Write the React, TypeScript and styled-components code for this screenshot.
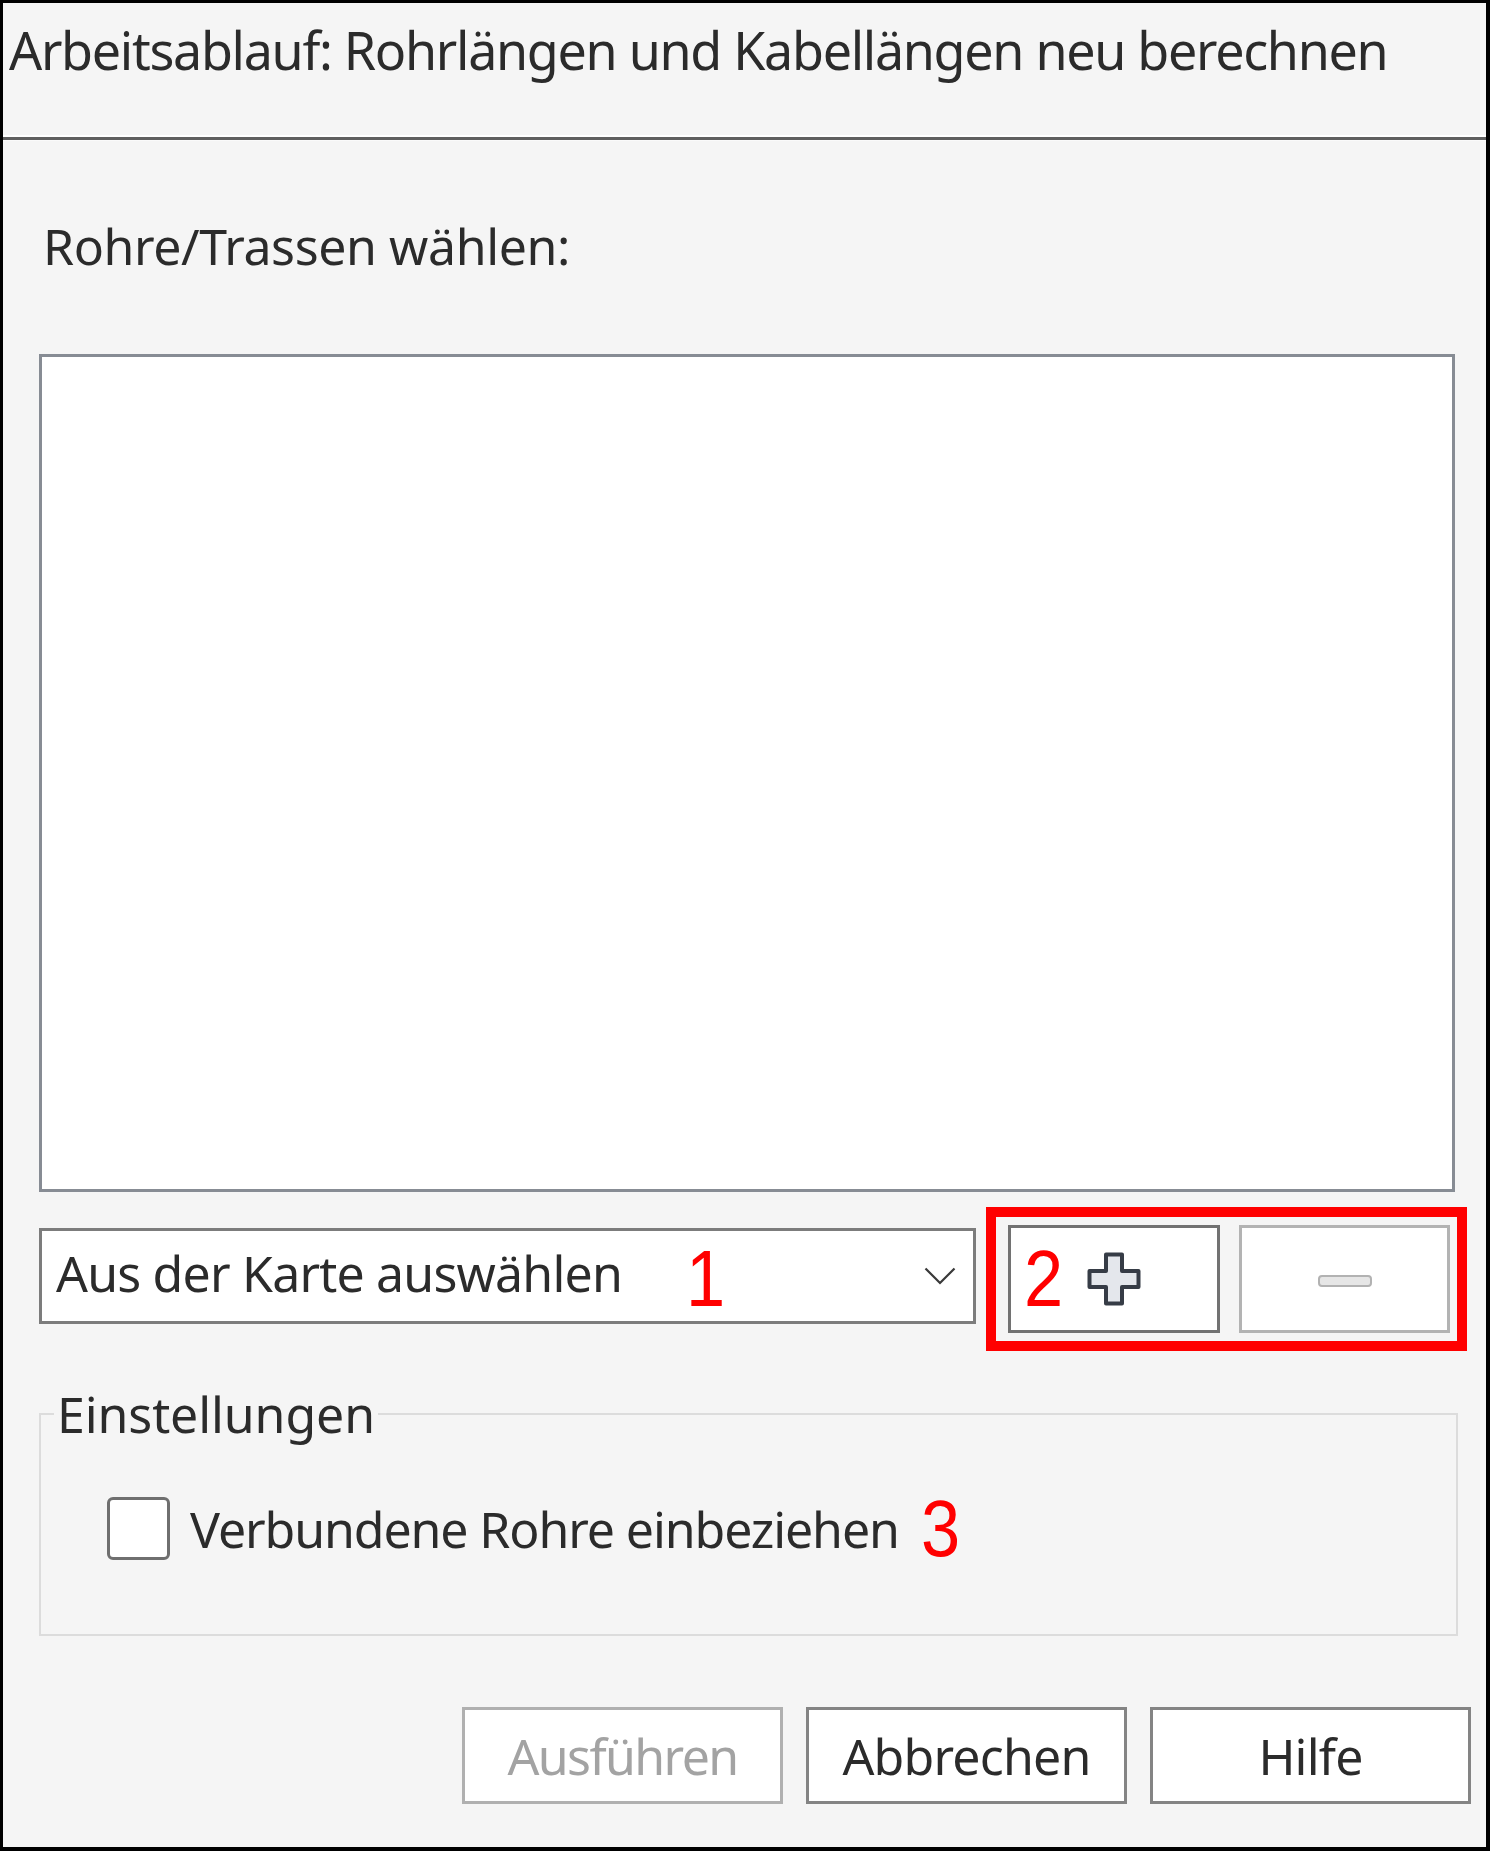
import React from "react";
import styled, { createGlobalStyle } from "styled-components";

const GlobalStyle = createGlobalStyle`
  html, body {
    margin: 0;
    padding: 0;
    background: #f5f5f5;
  }
  * {
    box-sizing: border-box;
  }
`;

const Dialog = styled.div`
  width: 1490px;
  height: 1851px;
  border: 3px solid #000;
  border-right-width: 4px;
  border-bottom-width: 4px;
  background: #f5f5f5;
  font-family: "Noto Sans", "Open Sans", sans-serif;
  color: #2b2b2b;
  display: flex;
  flex-direction: column;
`;

const Header = styled.div`
  height: 132px;
  padding: 17px 0 0 6px;
  font-size: 52px;
  line-height: 60px;
  letter-spacing: -1.3px;
  white-space: nowrap;
`;

const Rule = styled.div`
  height: 6px;
  border-top: 2px solid #fff;
  border-bottom: 1px solid #fafafa;
  background: #5f5f5f;
`;

const Body = styled.div`
  flex: 1;
  display: flex;
  flex-direction: column;
  padding: 0 15px 0 36px;
  font-size: 50px;
  line-height: 60px;
  letter-spacing: -0.8px;
`;

const SectionLabel = styled.div`
  margin-top: 75px;
  padding-left: 4px;
  letter-spacing: -0.4px;
`;

const ListBox = styled.div`
  margin-top: 78px;
  width: 1416px;
  height: 838px;
  border: 3px solid #878c94;
  background: #fff;
`;

const PickRow = styled.div`
  margin-top: 15px;
  display: flex;
  align-items: center;
  gap: 10px;
`;

const Dropdown = styled.div`
  width: 937px;
  height: 96px;
  margin-bottom: 6px;
  border: 3px solid #7c7c7c;
  background: #fff;
  padding: 0 0 6px 14px;
  display: flex;
  align-items: center;
  white-space: nowrap;
`;

const Chevron = styled.svg`
  margin-left: auto;
  margin-right: 17px;
  margin-top: 6px;
`;

const Marker = styled.span<{ $gap?: number; $drop?: number }>`
  display: inline-block;
  font-family: "Liberation Sans", Arial, sans-serif;
  font-size: 80px;
  line-height: 80px;
  letter-spacing: 0;
  color: #ff0000;
  transform: scaleX(0.88);
  transform-origin: left center;
  margin-left: ${(p) => p.$gap ?? 0}px;
  margin-top: ${(p) => p.$drop ?? 0}px;
`;

const CornerMarker = styled(Marker)`
  position: absolute;
  left: 13px;
  top: 11px;
`;

const Highlight = styled.div`
  width: 481px;
  height: 144px;
  border: 10px solid #ff0000;
  padding: 8px 7px 8px 12px;
  display: flex;
  gap: 19px;
`;

const ToolButton = styled.button<{ $disabled?: boolean; $w: number }>`
  position: relative;
  width: ${(p) => p.$w}px;
  height: 108px;
  padding: 0;
  border: 3px solid ${(p) => (p.$disabled ? "#b3b3b3" : "#727272")};
  background: #fff;
  display: flex;
  align-items: center;
  justify-content: center;
`;

const MinusBar = styled.span`
  display: block;
  width: 54px;
  height: 12px;
  margin-top: 4px;
  border: 2px solid #b2b2b2;
  border-radius: 4px;
  background: #e6e6e6;
`;

const Group = styled.fieldset`
  margin: 33px 13px 0 0;
  min-width: 0;
  border: 2px solid #dcdcdc;
  padding: 53px 0 74px 0;
`;

const GroupTitle = styled.legend`
  margin-left: 13px;
  padding: 0 3px;
  font-size: 50px;
  line-height: 60px;
  letter-spacing: -0.1px;
`;

const CheckRow = styled.label`
  margin-left: 66px;
  height: 63px;
  display: flex;
  align-items: center;
  white-space: nowrap;
  letter-spacing: -1.1px;
`;

const CheckBox = styled.span`
  width: 63px;
  height: 63px;
  margin-right: 20px;
  border: 3px solid #6f6f6f;
  border-radius: 6px;
  background: #fff;
  flex: none;
`;

const Footer = styled.div`
  margin-top: 71px;
  display: flex;
  justify-content: flex-end;
  gap: 23px;
`;

const DialogButton = styled.button<{ $disabled?: boolean }>`
  width: 321px;
  height: 97px;
  padding: 0;
  border: 3px solid ${(p) => (p.$disabled ? "#b0b0b0" : "#848484")};
  background: #fff;
  font-family: inherit;
  font-size: 50px;
  line-height: 60px;
  letter-spacing: ${(p) => (p.$disabled ? "-1.6px" : "-0.8px")};
  color: ${(p) => (p.$disabled ? "#a3a3a3" : "#2b2b2b")};
`;

const PlusIcon = () => (
  <svg width="54" height="54" viewBox="0 0 54 54">
    <path
      d="M19 2.5 H35 V19 H51.5 V35 H35 V51.5 H19 V35 H2.5 V19 H19 Z"
      fill="#e4e7ec"
      stroke="#363c46"
      strokeWidth="4"
      strokeLinejoin="round"
    />
  </svg>
);

export default function App() {
  return (
    <>
      <GlobalStyle />
      <Dialog>
        <Header>Arbeitsablauf: Rohrlängen und Kabellängen neu berechnen</Header>
        <Rule />
        <Body>
          <SectionLabel>Rohre/Trassen wählen:</SectionLabel>
          <ListBox />
          <PickRow>
            <Dropdown>
              Aus der Karte auswählen
              <Marker $gap={64} $drop={11}>1</Marker>
              <Chevron width="32" height="18" viewBox="0 0 32 18">
                <polyline
                  points="1.5,1.5 16,16 30.5,1.5"
                  fill="none"
                  stroke="#3a3a3a"
                  strokeWidth="2.2"
                />
              </Chevron>
            </Dropdown>
            <Highlight>
              <ToolButton $w={212}>
                <CornerMarker>2</CornerMarker>
                <PlusIcon />
              </ToolButton>
              <ToolButton $w={211} $disabled>
                <MinusBar />
              </ToolButton>
            </Highlight>
          </PickRow>
          <Group>
            <GroupTitle>Einstellungen</GroupTitle>
            <CheckRow>
              <CheckBox />
              Verbundene Rohre einbeziehen
              <Marker $gap={22}>3</Marker>
            </CheckRow>
          </Group>
          <Footer>
            <DialogButton $disabled>Ausführen</DialogButton>
            <DialogButton>Abbrechen</DialogButton>
            <DialogButton>Hilfe</DialogButton>
          </Footer>
        </Body>
      </Dialog>
    </>
  );
}
